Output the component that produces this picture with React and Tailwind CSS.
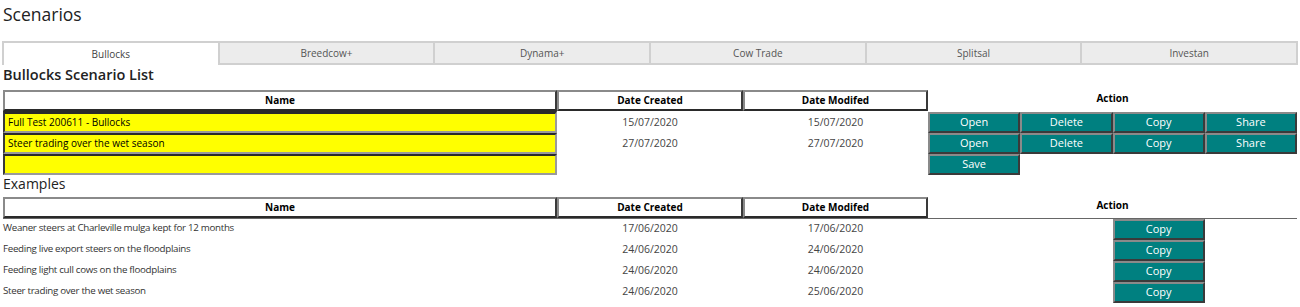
import React from 'react';

const tabs = ['Bullocks', 'Breedcow+', 'Dynama+', 'Cow Trade', 'Splitsal', 'Investan'];

const myScenarios = [
  { name: 'Full Test 200611 - Bullocks', created: '15/07/2020', modified: '15/07/2020' },
  { name: 'Steer trading over the wet season', created: '27/07/2020', modified: '27/07/2020' },
];

const examples = [
  { name: 'Weaner steers at Charleville mulga kept for 12 months', created: '17/06/2020', modified: '17/06/2020' },
  { name: 'Feeding live export steers on the floodplains', created: '24/06/2020', modified: '24/06/2020' },
  { name: 'Feeding light cull cows on the floodplains', created: '24/06/2020', modified: '24/06/2020' },
  { name: 'Steer trading over the wet season', created: '24/06/2020', modified: '25/06/2020' },
];

const grid = 'grid grid-cols-[554px_186px_185px_1fr]';

const HeaderCell = ({ children }) => (
  <div className="h-[21px] flex items-center justify-center border-2 border-t-[#8a8a8a] border-l-[#8a8a8a] border-r-[#3a3a3a] border-b-[#2a2a2a] bg-white text-[10px] font-bold text-black">
    {children}
  </div>
);

const ActionButton = ({ label }) => (
  <button
    type="button"
    className="h-[21px] w-full flex items-center justify-center bg-[#008080] text-white text-[11px] border-2 border-t-[#8a8a8a] border-l-[#8a8a8a] border-r-[#3a3a3a] border-b-[#3a3a3a]"
  >
    {label}
  </button>
);

const DateCell = ({ children }) => (
  <div className="h-[21px] flex items-center justify-center text-[10.5px] text-[#444]">{children}</div>
);

export default function App() {
  return (
    <div
      className="w-[1300px] h-[307px] bg-white overflow-hidden px-[3px] text-[#333]"
      style={{ fontFamily: '"Open Sans", "Noto Sans", sans-serif' }}
    >
      <h1 className="text-[17.5px] leading-[26px] pt-[1px] font-medium text-[#222]">Scenarios</h1>

      <div className="mt-[14px] -mx-[1px] flex h-[24px]">
        {tabs.map((t, i) => (
          <div
            key={t}
            className={
              i === 0
                ? 'flex-1 flex items-center justify-center bg-white border-t-2 border-l-2 border-r-2 border-[#d0d0d0] text-[10px] text-[#444]'
                : 'flex-1 flex items-center justify-center bg-[#ececec] border-2 border-l-0 border-[#d0d0d0] text-[10px] text-[#555]'
            }
          >
            {t}
          </div>
        ))}
      </div>

      <h2 className="text-[14.5px] leading-[20px] font-semibold text-[#222]">Bullocks Scenario List</h2>

      <div className={`${grid} mt-[5px]`}>
        <HeaderCell>Name</HeaderCell>
        <HeaderCell>Date Created</HeaderCell>
        <HeaderCell>Date Modifed</HeaderCell>
        <div className="h-[21px] flex items-center justify-center text-[10px] font-bold text-black -mt-[2px]">Action</div>
      </div>

      <div className="flex flex-col mt-[1px]">
        {myScenarios.map((s, idx) => (
          <div key={s.name} className={grid}>
            <div
              className={`h-[21px] flex items-center px-[3px] bg-[#ffff00] border-2 border-t-[#2a2a2a] border-l-[#3a3a3a] border-r-[#9a9a9a] border-b-[#9a9a9a] text-[10px] text-black ${idx === 0 ? 'border-t-[3px] border-t-[#1a1a1a] -mt-[1px] h-[22px]' : ''}`}
            >
              {s.name}
            </div>
            <DateCell>{s.created}</DateCell>
            <DateCell>{s.modified}</DateCell>
            <div className="grid grid-cols-4">
              <ActionButton label="Open" />
              <ActionButton label="Delete" />
              <ActionButton label="Copy" />
              <ActionButton label="Share" />
            </div>
          </div>
        ))}
        <div className={grid}>
          <div className="h-[21px] bg-[#ffff00] border-2 border-t-[#2a2a2a] border-l-[#3a3a3a] border-r-[#9a9a9a] border-b-[#9a9a9a]" />
          <div />
          <div />
          <div className="grid grid-cols-4">
            <ActionButton label="Save" />
          </div>
        </div>
      </div>

      <h3 className="text-[14px] leading-[18px] text-[#222]">Examples</h3>

      <div className={`${grid} mt-[4px] border-b border-[#666]`}>
        <HeaderCell>Name</HeaderCell>
        <HeaderCell>Date Created</HeaderCell>
        <HeaderCell>Date Modifed</HeaderCell>
        <div className="h-[21px] flex items-center justify-center text-[10px] font-bold text-black -mt-[2px]">Action</div>
      </div>

      <div className="flex flex-col">
        {examples.map((e) => (
          <div key={e.name} className={grid}>
            <div className="h-[21px] flex items-center pb-[2px] text-[9.75px] tracking-[-0.3px] text-[#333]">{e.name}</div>
            <div className="h-[21px] flex items-center justify-center pb-[2px] text-[10.5px] text-[#444]">{e.created}</div>
            <div className="h-[21px] flex items-center justify-center pb-[2px] text-[10.5px] text-[#444]">{e.modified}</div>
            <div className="grid grid-cols-4">
              <div />
              <div />
              <ActionButton label="Copy" />
              <div />
            </div>
          </div>
        ))}
      </div>
    </div>
  );
}
